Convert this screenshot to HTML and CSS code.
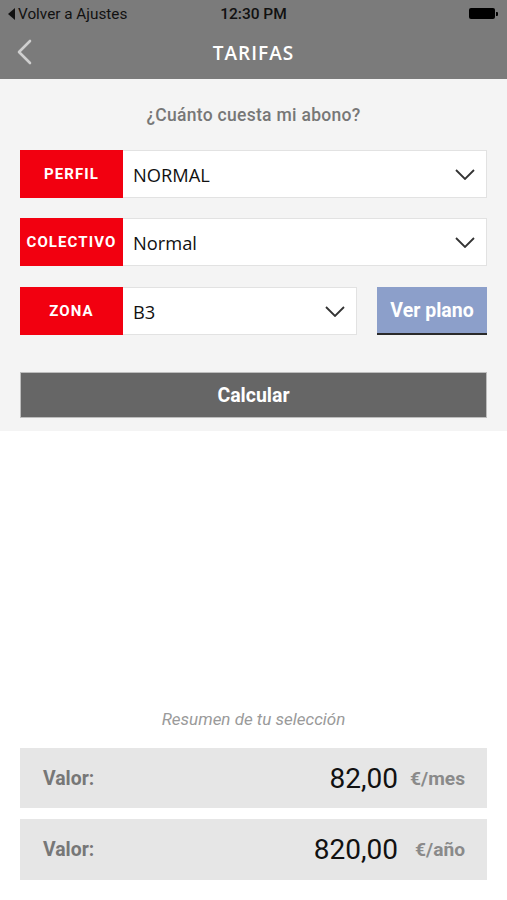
FILE: index.html
```html
<!DOCTYPE html>
<html lang="es">
<head>
<meta charset="utf-8">
<title>Tarifas</title>
<link rel="stylesheet" href="styles.css">
</head>
<body>
<div class="screen">
  <header class="top">
    <div class="status">
      <div class="status-left"><span class="tri"></span>Volver a Ajustes</div>
      <div class="status-time">12:30 PM</div>
      <div class="status-right"><span class="battery"></span><span class="battery-tip"></span></div>
    </div>
    <div class="nav">
      <svg class="back" width="16" height="26" viewBox="0 0 16 26"><path d="M14 2 L3 13 L14 24" fill="none" stroke="#cfcfcf" stroke-width="2.6" stroke-linecap="round" stroke-linejoin="round"/></svg>
      <h1 class="nav-title">TARIFAS</h1>
    </div>
  </header>

  <section class="form">
    <p class="question">¿Cuánto cuesta mi abono?</p>
    <div class="row row-a">
      <div class="label">PERFIL</div>
      <div class="select">
        <span class="value caps">NORMAL</span>
        <svg class="chev" width="20" height="11" viewBox="0 0 20 11"><path d="M1 1 L10 10 L19 1" fill="none" stroke="#333" stroke-width="1.8"/></svg>
      </div>
    </div>
    <div class="row row-b">
      <div class="label">COLECTIVO</div>
      <div class="select">
        <span class="value">Normal</span>
        <svg class="chev" width="20" height="11" viewBox="0 0 20 11"><path d="M1 1 L10 10 L19 1" fill="none" stroke="#333" stroke-width="1.8"/></svg>
      </div>
    </div>
    <div class="row row-c">
      <div class="label">ZONA</div>
      <div class="select short">
        <span class="value">B3</span>
        <svg class="chev" width="20" height="11" viewBox="0 0 20 11"><path d="M1 1 L10 10 L19 1" fill="none" stroke="#333" stroke-width="1.8"/></svg>
      </div>
      <button class="plano">Ver plano</button>
    </div>
    <button class="calc">Calcular</button>
  </section>

  <section class="summary">
    <p class="summary-title">Resumen de tu selección</p>
    <div class="result">
      <span class="r-label">Valor:</span>
      <span class="r-num">82,00</span>
      <span class="r-unit">€/mes</span>
    </div>
    <div class="result">
      <span class="r-label">Valor:</span>
      <span class="r-num">820,00</span>
      <span class="r-unit">€/año</span>
    </div>
  </section>
</div>
</body>
</html>
```

FILE: styles.css
```css
* { box-sizing: border-box; }
html, body { margin: 0; padding: 0; background: #fff; }
body { font-family: "Liberation Sans", Arial, sans-serif; }

.screen { width: 507px; height: 900px; display: flex; flex-direction: column; }

.top { background: #7b7b7b; height: 79px; }
.status { height: 27px; display: flex; align-items: center; justify-content: space-between; padding: 0 9px 0 8px; position: relative; }
.status-left { font-family: Roboto, "Liberation Sans", sans-serif; font-size: 15.3px; color: #111; display: flex; align-items: center; }
.tri { width: 0; height: 0; border-top: 6px solid transparent; border-bottom: 6px solid transparent; border-right: 7px solid #111; margin-right: 3px; }
.status-time { position: absolute; left: 0; right: 0; text-align: center; font-family: Roboto, "Liberation Sans", sans-serif; font-weight: 500; font-size: 15.5px; color: #111; pointer-events: none; }
.status-right { display: flex; align-items: center; }
.battery { width: 26px; height: 11px; background: #000; border-radius: 2px; }
.battery-tip { width: 2px; height: 4px; background: #000; margin-left: 1px; border-radius: 0 1px 1px 0; }

.nav { height: 52px; position: relative; display: flex; align-items: center; justify-content: center; }
.back { position: absolute; left: 16px; top: 12px; }
.nav-title { margin: 0; font-family: "Open Sans", sans-serif; font-weight: 600; font-size: 19px; color: #fff; letter-spacing: 1px; }

.form { background: #f4f4f4; padding: 26px 20px 13px; }
.question { margin: 0 0 25px; text-align: center; font-family: Roboto, sans-serif; font-weight: 500; font-size: 17.5px; letter-spacing: 0.3px; color: #777; line-height: 20px; }

.row { display: flex; height: 48px; margin-bottom: 20px; }
.row-b { margin-bottom: 21px; }
.label { width: 103px; background: #f20010; color: #fff; font-family: Roboto, sans-serif; font-weight: 700; font-size: 15px; letter-spacing: 1.1px; display: flex; align-items: center; justify-content: center; }
.select { flex: 1; background: #fff; border: 1px solid #e2e2e2; border-left: none; display: flex; align-items: center; justify-content: space-between; padding: 0 11px 0 10px; }
.select.short { flex: 0 0 234px; }
.value { font-family: "Open Sans", sans-serif; font-size: 18.3px; color: #111; }
.chev { display: block; }

.plano { margin-left: 20px; flex: 1; background: #8c9fca; border: none; border-bottom: 2px solid #2a2a2a; color: #fff; font-family: Roboto, sans-serif; font-weight: 700; font-size: 19.5px; padding: 0; }

.calc { display: block; width: 100%; height: 46px; margin-top: 37px; background: #666; border: 1px solid #bdbdbd; color: #fff; font-family: Roboto, sans-serif; font-weight: 700; font-size: 19.5px; padding: 0; }

.summary { margin-top: auto; padding: 0 20px 20px; }
.summary-title { margin: 0 0 17px; text-align: center; font-family: Roboto, sans-serif; font-style: italic; font-size: 17px; color: #9a9a9a; line-height: 24px; }
.result { height: 61px; background: #e6e6e6; display: flex; align-items: center; padding: 0 22px 0 23px; margin-bottom: 11px; }
.result:first-of-type { height: 60px; }
.result:last-child { margin-bottom: 0; }
.r-label { flex: 1; font-family: Roboto, sans-serif; font-weight: 700; font-size: 19.4px; color: #777; }
.r-num { font-family: Roboto, sans-serif; font-size: 28px; color: #111; }
.r-unit { width: 67px; text-align: right; font-family: Roboto, sans-serif; font-weight: 700; font-size: 19.2px; color: #8a8a8a; }
```
